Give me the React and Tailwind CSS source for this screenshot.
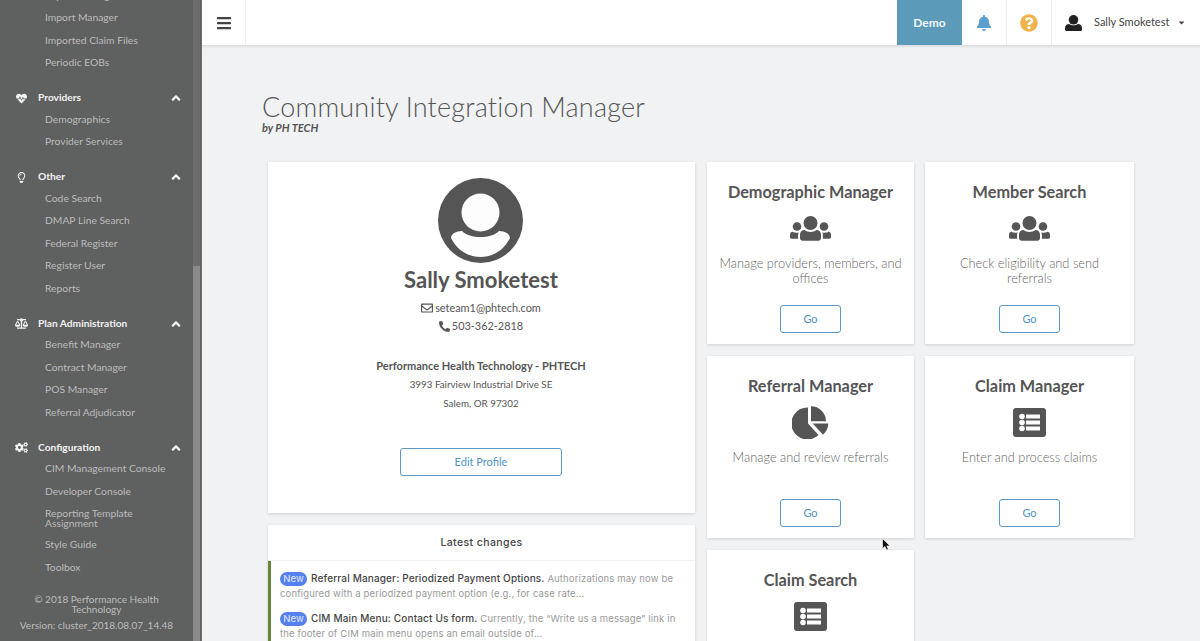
import { FaAngleUp, FaBalanceScale, FaBars, FaBell, FaCaretDown, FaCogs, FaHeartbeat, FaPhoneAlt, FaQuestionCircle, FaRegEnvelope, FaRegLightbulb } from "react-icons/fa";

const navGroups = [
  { title: "Providers", icon: FaHeartbeat, iconClass: "text-[11px]", items: ["Demographics", "Provider Services"] },
  { title: "Other", icon: FaRegLightbulb, iconClass: "text-[11px]", items: ["Code Search", "DMAP Line Search", "Federal Register", "Register User", "Reports"] },
  { title: "Plan Administration", icon: FaBalanceScale, iconClass: "text-[13px]", items: ["Benefit Manager", "Contract Manager", "POS Manager", "Referral Adjudicator"] },
  { title: "Configuration", icon: FaCogs, iconClass: "text-[13px]", items: ["CIM Management Console", "Developer Console", "Reporting Template Assignment", "Style Guide", "Toolbox"] },
];

function UsersIcon() {
  return (
    <svg viewBox="0 0 41 25" className="h-[25px] w-[41px]" fill="currentColor">
      <circle cx="20.500" cy="7" r="7" />
      <circle cx="7" cy="10.500" r="4.300" />
      <circle cx="34" cy="10.500" r="4.300" />
      <path d="M10 18.500c0-2.500 2-4.500 4.500-4.500 1.500 1.200 3.800 2 6 2s4.500-.8 6-2c2.500 0 4.500 2 4.500 4.500v3.500c0 1.500-1.200 2.700-2.700 2.700h-15.600c-1.500 0-2.700-1.200-2.700-2.700z" />
      <path d="M0 18.500c0-1.500 1.200-2.700 2.700-2.700 1.200.8 2.700 1.200 6 .7-.4.800-.6 1.400-.6 2.300v3.900h-6.400c-1 0-1.700-.7-1.700-1.700z" />
      <path d="M41 18.500c0-1.500-1.200-2.700-2.700-2.700-1.200.8-2.700 1.200-6 .7.4.8.600 1.400.6 2.300v3.900h6.400c1 0 1.700-.7 1.700-1.700z" />
    </svg>
  );
}

function PieIcon() {
  return (
    <svg viewBox="0 0 37 33" className="h-[33px] w-[37px]" fill="currentColor">
      <path d="M16 1.500V17.500L26.500 29A16 16 0 1 1 16 1.500Z" />
      <path d="M19 0.300V15.300H34A15 15 0 0 0 19 0.300Z" />
      <path d="M20.700 17.600H36.300A16 16 0 0 1 31 28.800Z" />
    </svg>
  );
}

function ListIcon() {
  return (
    <svg viewBox="0 0 33 29" className="h-[29px] w-[33px]">
      <rect width="33" height="29" rx="3" fill="currentColor" />
      {[8.500, 14.500, 20.500].map((y) => (
        <g key={y} fill="#fdfdfd">
          <circle cx="9" cy={y} r="2.800" />
          <rect x="13" y={y - 2} width="14" height="4" />
        </g>
      ))}
    </svg>
  );
}

const cards = [
  { title: "Demographic Manager", icon: UsersIcon, text: "Manage providers, members, and offices" },
  { title: "Member Search", icon: UsersIcon, text: "Check eligibility and send referrals" },
  { title: "Referral Manager", icon: PieIcon, text: "Manage and review referrals" },
  { title: "Claim Manager", icon: ListIcon, text: "Enter and process claims" },
  { title: "Claim Search", icon: ListIcon, text: "" },
];

const changes = [
  { head: "Referral Manager: Periodized Payment Options.", body: "Authorizations may now be configured with a periodized payment option (e.g., for case rate..." },
  { head: "CIM Main Menu: Contact Us form.", body: "Currently, the “Write us a message” link in the footer of CIM main menu opens an email outside of..." },
];

function NavItem({ label }) {
  const wraps = label.startsWith("Reporting");
  return (
    <div className={`flex items-center pl-[45px] pr-[50px] text-[10.300px] text-[#bcbcbc] ${wraps ? "h-[31px] leading-[10px]" : "h-[22.5px] whitespace-nowrap"}`}>
      {label}
    </div>
  );
}

function Sidebar() {
  return (
    <aside className="relative h-full w-[202px] shrink-0 overflow-hidden border-r border-[#6e6e6e] bg-[#5f6060]">
      <div className="absolute right-px top-0 h-[266px] w-[7px] bg-[#6d6d6d]" />
      <div className="absolute bottom-0 right-px h-[375px] w-[7px] bg-[#8b8b8b]" />
      <div className="mt-[-16px]">
        {["Import Setting", "Import Manager", "Imported Claim Files", "Periodic EOBs"].map((l) => (
          <NavItem key={l} label={l} />
        ))}
      </div>
      {navGroups.map((g) => (
        <div key={g.title} className="mt-[14px]">
          <div className="flex h-5 items-center text-[10.200px] font-bold text-[#f2f2f2]">
            <span className="flex w-[38px] justify-center pl-[6px] pr-[2px]">
              <g.icon className={g.iconClass} />
            </span>
            <span>{g.title}</span>
            <FaAngleUp className="ml-auto mr-[18px] text-[14px]" />
          </div>
          {g.items.map((l) => (
            <NavItem key={l} label={l} />
          ))}
        </div>
      ))}
      <div className="mt-[15px] pr-[8px] text-center text-[10px] leading-[10px] text-[#bcbcbc]">
        <p className="px-6">© 2018 Performance Health Technology</p>
        <p className="mt-[6px]">Version: cluster_2018.08.07_14.48</p>
      </div>
    </aside>
  );
}

function Header() {
  return (
    <header className="relative flex h-[46px] shrink-0 items-stretch border-b border-[#dcdcdf] bg-white shadow-[0_1px_2px_rgba(0,0,0,0.08)]">
      <div className="flex w-[44px] items-center justify-center border-r border-[#eeeeee] text-[#444]">
        <FaBars className="text-[16px]" />
      </div>
      <div className="ml-auto flex w-[65px] items-center justify-center bg-[#5b9ab8] text-[12px] font-bold text-[#f1f6f9]">Demo</div>
      <div className="flex w-[45px] items-center justify-center border-r border-[#eeeeee] text-[#5b9fd0]">
        <FaBell className="text-[16px]" />
      </div>
      <div className="flex w-[45px] items-center justify-center border-r border-[#eeeeee] text-[#f0b24a]">
        <FaQuestionCircle className="text-[18px]" />
      </div>
      <div className="flex w-[148px] items-center pl-[13px] text-[11px] text-[#444]">
        <svg viewBox="0 0 17 16" className="h-[16px] w-[17px] text-[#222]" fill="currentColor">
          <circle cx="8.500" cy="4.800" r="4.800" />
          <path d="M0 13c0-2.500 2-4 4-4 1.200.8 2.800 1.300 4.500 1.300S11.800 9.800 13 9c2 0 4 1.500 4 4v1.500c0 .9-.7 1.500-1.500 1.500h-14C.7 16 0 15.400 0 14.500z" />
        </svg>
        <span className="ml-[12px]">Sally Smoketest</span>
        <FaCaretDown className="ml-[8px] text-[9px]" />
      </div>
    </header>
  );
}

function Avatar() {
  return (
    <svg viewBox="0 0 85 85" className="mr-px h-[85px] w-[85px]">
      <circle cx="42.500" cy="42.500" r="42.500" fill="#555" />
      <circle cx="42.500" cy="34.500" r="19" fill="#fdfdfd" />
      <path d="M13 60C13 56 18 53 24 53C28 57 35 59 42.500 59S57 57 61 53C67 53 72 56 72 60C66 72 55 79 42.500 79S19 72 13 60Z" fill="#fdfdfd" />
    </svg>
  );
}

function ProfileCard() {
  return (
    <section className="flex h-[351px] flex-col items-center bg-white pr-px pt-4 shadow-[0_1px_3px_rgba(0,0,0,0.14)]">
      <Avatar />
      <h2 className="mt-[3px] text-[22px] font-bold leading-[28px] text-[#555]">Sally Smoketest</h2>
      <p className="mt-[5px] flex h-[18px] items-center gap-[2px] text-[10.900px] text-[#555]">
        <FaRegEnvelope className="text-[12px]" /> seteam1@phtech.com
      </p>
      <p className="flex h-[18px] items-center gap-[2px] text-[10.900px] text-[#555]">
        <FaPhoneAlt className="text-[11px]" /> 503-362-2818
      </p>
      <p className="mt-[22px] flex h-[18px] items-center text-[11px] font-bold text-[#555]">Performance Health Technology - PHTECH</p>
      <p className="flex h-[19px] items-center text-[9.800px] text-[#555]">3993 Fairview Industrial Drive SE</p>
      <p className="flex h-[18px] items-center text-[9.800px] text-[#555]">Salem, OR 97302</p>
      <button className="mt-[36px] h-[28px] w-[162px] rounded-[3px] border border-[#5b9ac4] text-[11px] text-[#4f94c4]">Edit Profile</button>
    </section>
  );
}

function ChangesCard() {
  return (
    <section className="mt-3 bg-white font-['Inter',sans-serif] shadow-[0_1px_3px_rgba(0,0,0,0.14)]">
      <div className="flex h-[36px] items-center justify-center border-b border-[#f0f0f0] text-[10.500px] font-medium tracking-[0.4px] text-[#444]">Latest changes</div>
      <div className="border-l-[3px] border-[#66853a] pb-6 pl-[9px] pr-3 pt-[10px]">
        {changes.map((c) => (
          <p key={c.head} className="mb-[10px] text-[9.500px] leading-[15px] tracking-[0.15px] text-[#999]">
            <span className="mr-[4px] inline-block h-[14px] w-[27px] rounded-full bg-[#5680ee] text-center leading-[14px] text-[#e6edff]">New</span>
            <span className="text-[10px] font-medium text-[#444]">{c.head}</span> {c.body}
          </p>
        ))}
      </div>
    </section>
  );
}

function ToolCard({ card, wide }) {
  return (
    <section className={`flex h-[182px] flex-col items-center bg-white px-2 pb-[11px] pt-[19px] text-center shadow-[0_1px_3px_rgba(0,0,0,0.14)] ${wide ? "w-[209px]" : "w-[207px]"}`}>
      <h3 className="text-[16.300px] font-bold leading-[21px] text-[#555]">{card.title}</h3>
      <div className="mt-[7px] flex h-[38px] items-center justify-center text-[#555]">
        <card.icon />
      </div>
      {card.text && <p className="mt-[9px] max-w-[186px] text-[12.800px] font-light leading-[15px] text-[#666]">{card.text}</p>}
      {card.text && <button className="mt-auto h-[28px] w-[61px] rounded-[3px] border border-[#5b9ac4] text-[11px] text-[#4f94c4]">Go</button>}
    </section>
  );
}

export default function App() {
  return (
    <div className="relative flex h-[641px] w-[1200px] overflow-hidden bg-[#f1f2f4] font-['Lato',sans-serif]">
      <Sidebar />
      <main className="flex min-w-0 flex-1 flex-col overflow-hidden">
        <Header />
        <div className="pl-[60px] pt-[46px]">
          <h1 className="text-[27px] font-light leading-[30px] tracking-[0.2px] text-[#555]">Community Integration Manager</h1>
          <p className="text-[11px] font-bold italic leading-[12px] text-[#555]">by PH TECH</p>
          <div className="ml-[6px] mt-[28px] flex items-start gap-3">
            <div className="w-[427px] shrink-0">
              <ProfileCard />
              <ChangesCard />
            </div>
            <div className="grid grid-cols-[207px_209px] gap-x-[11px] gap-y-3">
              {cards.map((c, i) => (
                <ToolCard key={c.title} card={c} wide={i % 2 === 1} />
              ))}
            </div>
          </div>
        </div>
      </main>
      <svg viewBox="0 0 9 13" className="absolute left-[882px] top-[538px] h-[13px] w-[9px]">
        <path d="M0.500 0.500v10l2.500-2 1.500 3.500 1.800-0.800-1.500-3.300h3.200z" fill="#111" stroke="#fff" strokeWidth="0.600" />
      </svg>
    </div>
  );
}
